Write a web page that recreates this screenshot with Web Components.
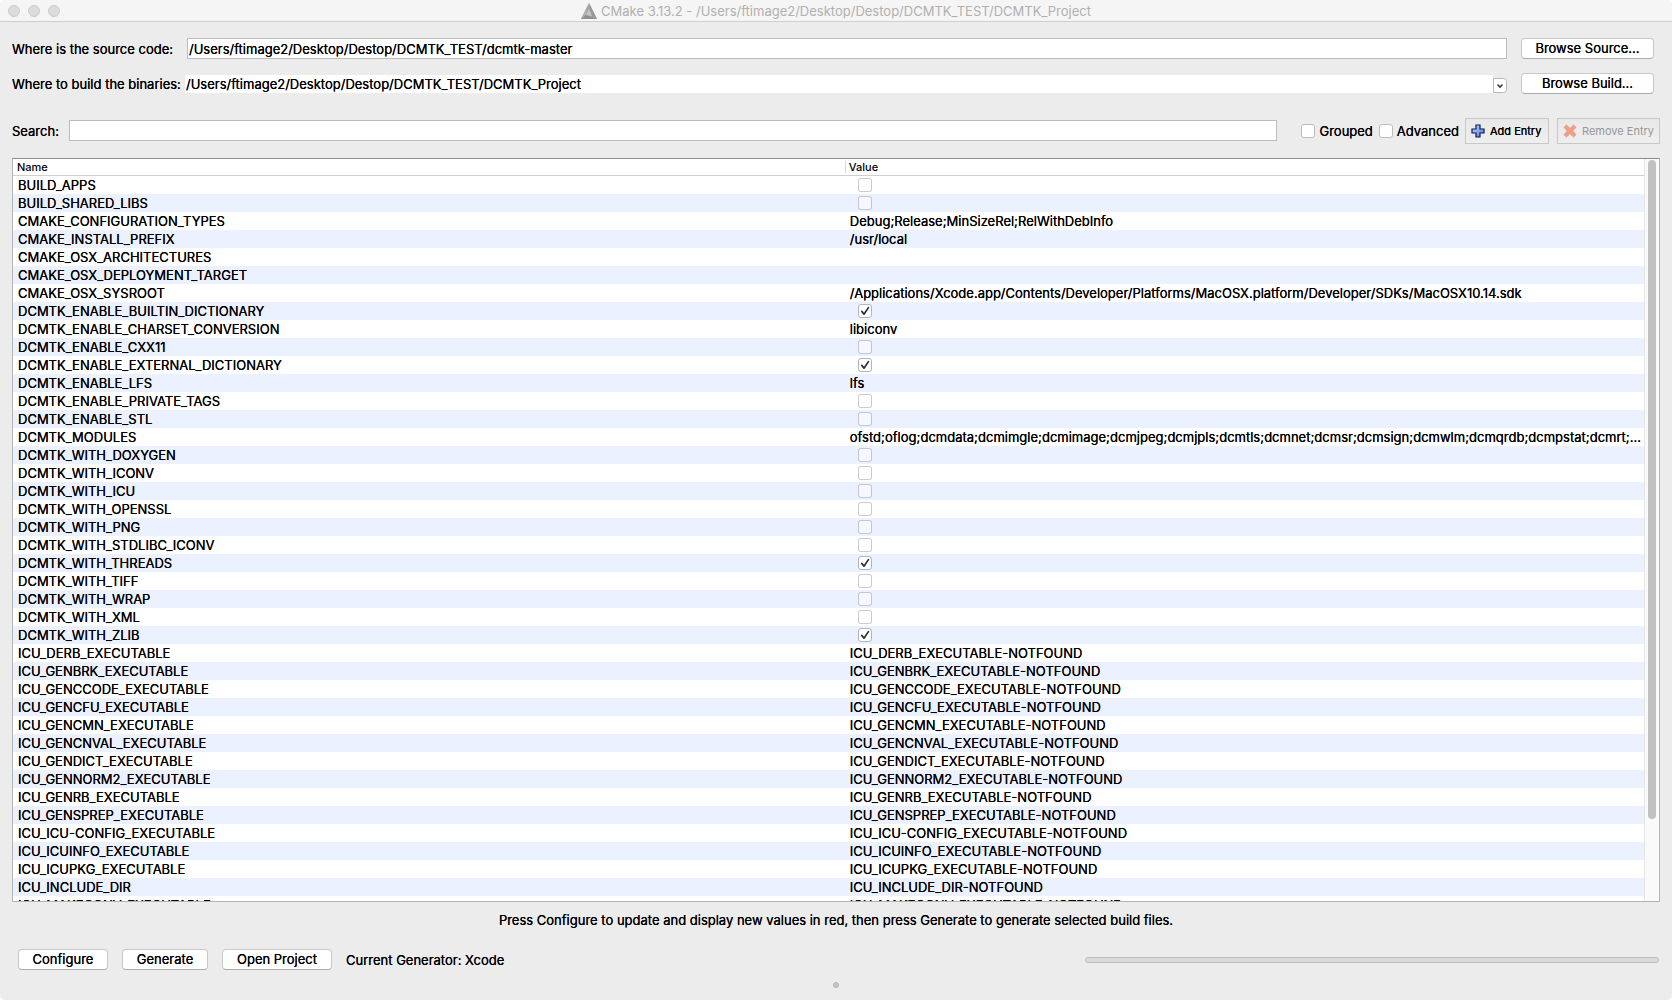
<!DOCTYPE html>
<html lang="en">
<head>
<meta charset="utf-8">
<title>CMake 3.13.2 - /Users/ftimage2/Desktop/Destop/DCMTK_TEST/DCMTK_Project</title>
<style>
  html, body { height: 100%; margin: 0; background: #fff; }
  body {
    font: 13px/18px Inter, "Liberation Sans", sans-serif;
    color: #000;
    text-shadow: 0 0 0 currentColor;
  }
</style>
</head>
<body>
<cmake-window></cmake-window>

<script>
class ShadowElement extends HTMLElement {
  constructor() {
    super();
    const root = this.attachShadow({ mode: 'open' });
    root.innerHTML = '<style>*{box-sizing:border-box}</style>' + this.template();
  }
}

/* Title bar with the three window lights and the document title */
customElements.define('title-bar', class extends ShadowElement {
  template() {
    return `
    <style>
      :host { display: grid; grid-template-columns: 1fr auto 1fr; align-items: center; height: 22px;
              padding: 0 8px; background: #f5f5f5; border-bottom: 1px solid #cfcfcf; box-sizing: border-box;
              border-radius: 5px 5px 0 0; }
      .lights { display: flex; gap: 8px; }
      .lights i { width: 12px; height: 12px; border-radius: 50%; background: #dcdcdc; border: 1px solid #cbcbcb; }
      h1 { margin: 0; display: flex; align-items: center; gap: 4px; font: inherit; color: #b0b0b0; text-shadow: none; }
      svg { display: block; }
    </style>
    <div class="lights"><i></i><i></i><i></i></div>
    <h1>
      <svg width="16" height="16" viewBox="0 0 16 16" aria-hidden="true">
        <path d="M8 0 0 16h16z" fill="#a2a2a2"/>
        <path d="M8 0 0 16l5-4z" fill="#b0b0b0"/>
        <path d="M8 0 16 16l-5-3z" fill="#989898"/>
        <path d="M0 16l5-4 11 4z" fill="#8f8f8f"/>
        <path d="M8 6 5 12l6 1z" fill="#c6c6c6"/>
      </svg>
      <slot></slot>
    </h1>`;
  }
});

/* Rounded push button */
customElements.define('push-button', class extends ShadowElement {
  template() {
    return `
    <style>
      :host { display: block; }
      button { width: 100%; height: 21px; padding: 0 12px; font: inherit; color: inherit; text-shadow: inherit;
               background: #fff; border: 1px solid #c8c8c8; border-bottom-color: #ababab; border-radius: 4px;
               line-height: 19px; white-space: nowrap; }
    </style>
    <button type="button"><slot></slot></button>`;
  }
});

/* Square tool button with an icon */
customElements.define('tool-button', class extends ShadowElement {
  static observedAttributes = ['disabled', 'icon'];
  template() {
    return `
    <style>
      :host { display: block; }
      button { display: flex; align-items: center; gap: 5px; width: 100%; height: 26px; padding: 0 5px;
               font: inherit; font-size: 11px; color: #000; text-shadow: inherit; white-space: nowrap;
               background: linear-gradient(#e8e8e8, #efefef); border: 1px solid #c8c8c8; }
      button:disabled { color: #979797; text-shadow: none; }
      svg { display: none; flex: none; }
      :host([icon=add]) .add, :host([icon=remove]) .remove { display: block; }
    </style>
    <button type="button">
      <svg class="add" width="14" height="14" viewBox="0 0 14 14" aria-hidden="true">
        <defs><linearGradient id="g" x1="0" y1="0" x2="1" y2="1"><stop offset="0" stop-color="#c8daf9"/><stop offset="1" stop-color="#4a76d6"/></linearGradient></defs>
        <path d="M5 1h4v4h4v4H9v4H5V9H1V5h4z" fill="url(#g)" stroke="#0c1a58" stroke-width="1.2"/>
      </svg>
      <svg class="remove" width="14" height="14" viewBox="0 0 14 14" aria-hidden="true">
        <path d="M3.5 1 7 4.4 10.5 1 13 3.3 9.6 7l3.4 3.6-2.5 2.4L7 9.6 3.5 13 1 10.6 4.4 7 1 3.3z" fill="#f79a80" stroke="#cfa79e" stroke-width="1"/>
      </svg>
      <slot></slot>
    </button>`;
  }
  attributeChangedCallback() {
    this.shadowRoot.querySelector('button').disabled = this.hasAttribute('disabled');
  }
});

/* Tick box, with an optional caption in its slot */
customElements.define('check-box', class extends ShadowElement {
  static observedAttributes = ['checked', 'caption'];
  template() {
    return `
    <style>
      :host { display: block; }
      label { display: flex; align-items: center; gap: 4px; }
      .box { display: grid; width: 14px; height: 14px; flex: none; }
      .box > * { grid-area: 1 / 1; }
      input { appearance: none; width: 14px; height: 14px; margin: 0; background: #fff;
              border: 1px solid #bcbcbc; border-radius: 3px; }
      :host([faint]) input { background: #fff8; border-color: #0003; }
      :host([checked]) input { background: #fff; border-color: #b2b5bb; }
      svg { display: none; pointer-events: none; }
      input:checked + svg { display: block; }
    </style>
    <label>
      <span class="box">
        <input type="checkbox">
        <svg width="14" height="14" viewBox="0 0 14 14" aria-hidden="true">
          <path d="M3.8 7.4 6 10.2 10.4 3.6" fill="none" stroke="#2b2d3c" stroke-width="1.7" stroke-linecap="round" stroke-linejoin="round"/>
        </svg>
      </span>
      <slot></slot>
    </label>`;
  }
  attributeChangedCallback() {
    const input = this.shadowRoot.querySelector('input');
    input.checked = this.hasAttribute('checked');
    if (this.hasAttribute('caption')) input.setAttribute('aria-label', this.getAttribute('caption'));
  }
});

/* Source and build directories */
customElements.define('path-form', class extends ShadowElement {
  template() {
    return `
    <style>
      :host { display: grid; grid-template-columns: 173px 1fr 133px; row-gap: 14px;
              align-items: center; padding-right: 6px; }
      label { white-space: nowrap; }
      input { height: 21px; margin: 0 14px 0 2px; padding: 1px 1px 0; border: 1px solid #bcbcbc; background: #fff;
              font: inherit; color: inherit; text-shadow: inherit; outline: none; min-width: 0; }
      .combo { display: grid; grid-template-columns: 1fr 14px; height: 18px; margin-right: 14px; min-width: 0; }
      select { grid-area: 1 / 1 / 2 / 3; appearance: none; height: 18px; margin: 0 14px 0 0; padding: 0 0 0 1px;
               border: 0; border-radius: 0; background: #fff; font: inherit; color: inherit; text-shadow: inherit; }
      svg { grid-area: 1 / 2; pointer-events: none; align-self: end; }
    </style>
    <label for="src">Where is the source code:</label>
    <input id="src" type="text" value="/Users/ftimage2/Desktop/Destop/DCMTK_TEST/dcmtk-master">
    <push-button>Browse Source...</push-button>
    <label for="bin">Where to build the binaries:</label>
    <div class="combo">
      <select id="bin"><option>/Users/ftimage2/Desktop/Destop/DCMTK_TEST/DCMTK_Project</option></select>
      <svg width="14" height="15" viewBox="0 0 14 15" aria-hidden="true">
        <path d="M0.500.5h10a3 3 0 0 1 3 3v8a3 3 0 0 1-3 3h-10z" fill="#fff" stroke="#b9b9b9"/>
        <path d="M4.500 6.500l2.500 2.500 2.500-2.500" fill="none" stroke="#3c3c3c" stroke-width="1.600"/>
      </svg>
    </div>
    <push-button>Browse Build...</push-button>`;
  }
});

/* Search box, view options and entry tools */
customElements.define('search-bar', class extends ShadowElement {
  template() {
    return `
    <style>
      :host { display: flex; align-items: center; }
      label { width: 57px; flex: none; }
      input { flex: 1; min-width: 0; height: 21px; margin: 2px 24px 0 0; padding: 0 1px; border: 1px solid #bcbcbc;
              background: #fff; font: inherit; outline: none; align-self: flex-start; }
      check-box { margin-right: 6px; }
      .tools { display: flex; gap: 8px; }
      .add { width: 84px; }
      .remove { width: 103px; }
    </style>
    <label for="q">Search:</label>
    <input id="q" type="text">
    <check-box>Grouped</check-box>
    <check-box>Advanced</check-box>
    <div class="tools">
      <tool-button class="add" icon="add">Add Entry</tool-button>
      <tool-button class="remove" icon="remove" disabled>Remove Entry</tool-button>
    </div>`;
  }
});

/* Cache entries: true and false draw a tick box, text is drawn as it is */
const NF = name => [name, name + '-NOTFOUND'];
const ENTRIES = [
  ['BUILD_APPS', false],
  ['BUILD_SHARED_LIBS', false],
  ['CMAKE_CONFIGURATION_TYPES', 'Debug;Release;MinSizeRel;RelWithDebInfo'],
  ['CMAKE_INSTALL_PREFIX', '/usr/local'],
  ['CMAKE_OSX_ARCHITECTURES', ''],
  ['CMAKE_OSX_DEPLOYMENT_TARGET', ''],
  ['CMAKE_OSX_SYSROOT', '/Applications/Xcode.app/Contents/Developer/Platforms/MacOSX.platform/Developer/SDKs/MacOSX10.14.sdk'],
  ['DCMTK_ENABLE_BUILTIN_DICTIONARY', true],
  ['DCMTK_ENABLE_CHARSET_CONVERSION', 'libiconv'],
  ['DCMTK_ENABLE_CXX11', false],
  ['DCMTK_ENABLE_EXTERNAL_DICTIONARY', true],
  ['DCMTK_ENABLE_LFS', 'lfs'],
  ['DCMTK_ENABLE_PRIVATE_TAGS', false],
  ['DCMTK_ENABLE_STL', false],
  ['DCMTK_MODULES', 'ofstd;oflog;dcmdata;dcmimgle;dcmimage;dcmjpeg;dcmjpls;dcmtls;dcmnet;dcmsr;dcmsign;dcmwlm;dcmqrdb;dcmpstat;dcmrt;...'],
  ['DCMTK_WITH_DOXYGEN', false],
  ['DCMTK_WITH_ICONV', false],
  ['DCMTK_WITH_ICU', false],
  ['DCMTK_WITH_OPENSSL', false],
  ['DCMTK_WITH_PNG', false],
  ['DCMTK_WITH_STDLIBC_ICONV', false],
  ['DCMTK_WITH_THREADS', true],
  ['DCMTK_WITH_TIFF', false],
  ['DCMTK_WITH_WRAP', false],
  ['DCMTK_WITH_XML', false],
  ['DCMTK_WITH_ZLIB', true],
  NF('ICU_DERB_EXECUTABLE'),
  NF('ICU_GENBRK_EXECUTABLE'),
  NF('ICU_GENCCODE_EXECUTABLE'),
  NF('ICU_GENCFU_EXECUTABLE'),
  NF('ICU_GENCMN_EXECUTABLE'),
  NF('ICU_GENCNVAL_EXECUTABLE'),
  NF('ICU_GENDICT_EXECUTABLE'),
  NF('ICU_GENNORM2_EXECUTABLE'),
  NF('ICU_GENRB_EXECUTABLE'),
  NF('ICU_GENSPREP_EXECUTABLE'),
  NF('ICU_ICU-CONFIG_EXECUTABLE'),
  NF('ICU_ICUINFO_EXECUTABLE'),
  NF('ICU_ICUPKG_EXECUTABLE'),
  NF('ICU_INCLUDE_DIR'),
  NF('ICU_MAKECONV_EXECUTABLE')
];

customElements.define('cache-table', class extends ShadowElement {
  template() {
    const cell = (name, v) => typeof v === 'boolean'
      ? `<td class="tick"><check-box faint caption="${name}"${v ? ' checked' : ''}></check-box></td>`
      : `<td>${v}</td>`;
    return `
    <style>
      :host { display: flex; overflow: hidden; background: #fff; border: 1px solid #b4b4b4; border-top-color: #8c8c8c; }
      .view { flex: 1; min-width: 0; overflow: hidden; }
      table { width: 100%; border-collapse: separate; border-spacing: 0; table-layout: fixed; }
      th { height: 17px; padding: 0 0 0 4px; font-size: 11px; line-height: 16px; font-weight: 500; text-align: left;
           text-shadow: none; border-bottom: 1px solid #d0d0d0; }
      th:first-child { width: 51%; }
      th + th { background: linear-gradient(#d8d8d8, #d8d8d8) 0 2px / 1px 12px no-repeat; }
      td { height: 18px; padding: 0 0 0 5px; white-space: nowrap; overflow: hidden; }
      td.tick { padding-left: 13px; }
      tr:nth-child(even) td { background: #ebf1fe; }
      .track { width: 15px; padding: 1px 3px; background: #fafafa; border-left: 1px solid #e4e4e4; flex: none; }
      .thumb { width: 8px; height: 89%; border-radius: 4px; background: #c1c1c1; }
    </style>
    <div class="view">
      <table>
        <thead><tr><th>Name</th><th>Value</th></tr></thead>
        <tbody>${ENTRIES.map(([n, v]) => `<tr><td>${n}</td>${cell(n, v)}</tr>`).join('')}</tbody>
      </table>
    </div>
    <div class="track"><div class="thumb"></div></div>`;
  }
});

/* Action buttons, generator name and progress */
customElements.define('action-bar', class extends ShadowElement {
  template() {
    return `
    <style>
      :host { display: flex; align-items: center; gap: 14px; padding: 0 1px 0 6px; }
      .configure { width: 90px; }
      .generate { width: 86px; }
      .open { width: 110px; }
      .progress { flex: none; width: 35%; height: 6px; margin-left: auto; border: 1px solid #bdbdbd;
                  border-radius: 3px; background: #dadada; }
    </style>
    <push-button class="configure">Configure</push-button>
    <push-button class="generate">Generate</push-button>
    <push-button class="open">Open Project</push-button>
    <span>Current Generator: Xcode</span>
    <div class="progress" role="progressbar" aria-label="Progress"></div>`;
  }
});

customElements.define('cmake-window', class extends ShadowElement {
  template() {
    return `
    <style>
      :host { display: flex; flex-direction: column; height: 100vh; background: #ececec; border-radius: 5px; overflow: hidden; }
      main { flex: 1; min-height: 0; display: flex; flex-direction: column; padding: 16px 12px 12px; }
      search-bar { margin: 24px 0 14px; }
      cache-table { flex: 1; min-height: 0; }
      p { margin: 9px 0 20px; text-align: center; }
      .grip { width: 6px; height: 6px; margin: 12px auto 0; border-radius: 50%; background: #c4c4c4; border: 1px solid #b4b4b4; }
    </style>
    <title-bar>CMake 3.13.2 - /Users/ftimage2/Desktop/Destop/DCMTK_TEST/DCMTK_Project</title-bar>
    <main>
      <path-form></path-form>
      <search-bar></search-bar>
      <cache-table></cache-table>
      <p>Press Configure to update and display new values in red, then press Generate to generate selected build files.</p>
      <action-bar></action-bar>
      <div class="grip"></div>
    </main>`;
  }
});
</script>
</body>
</html>
